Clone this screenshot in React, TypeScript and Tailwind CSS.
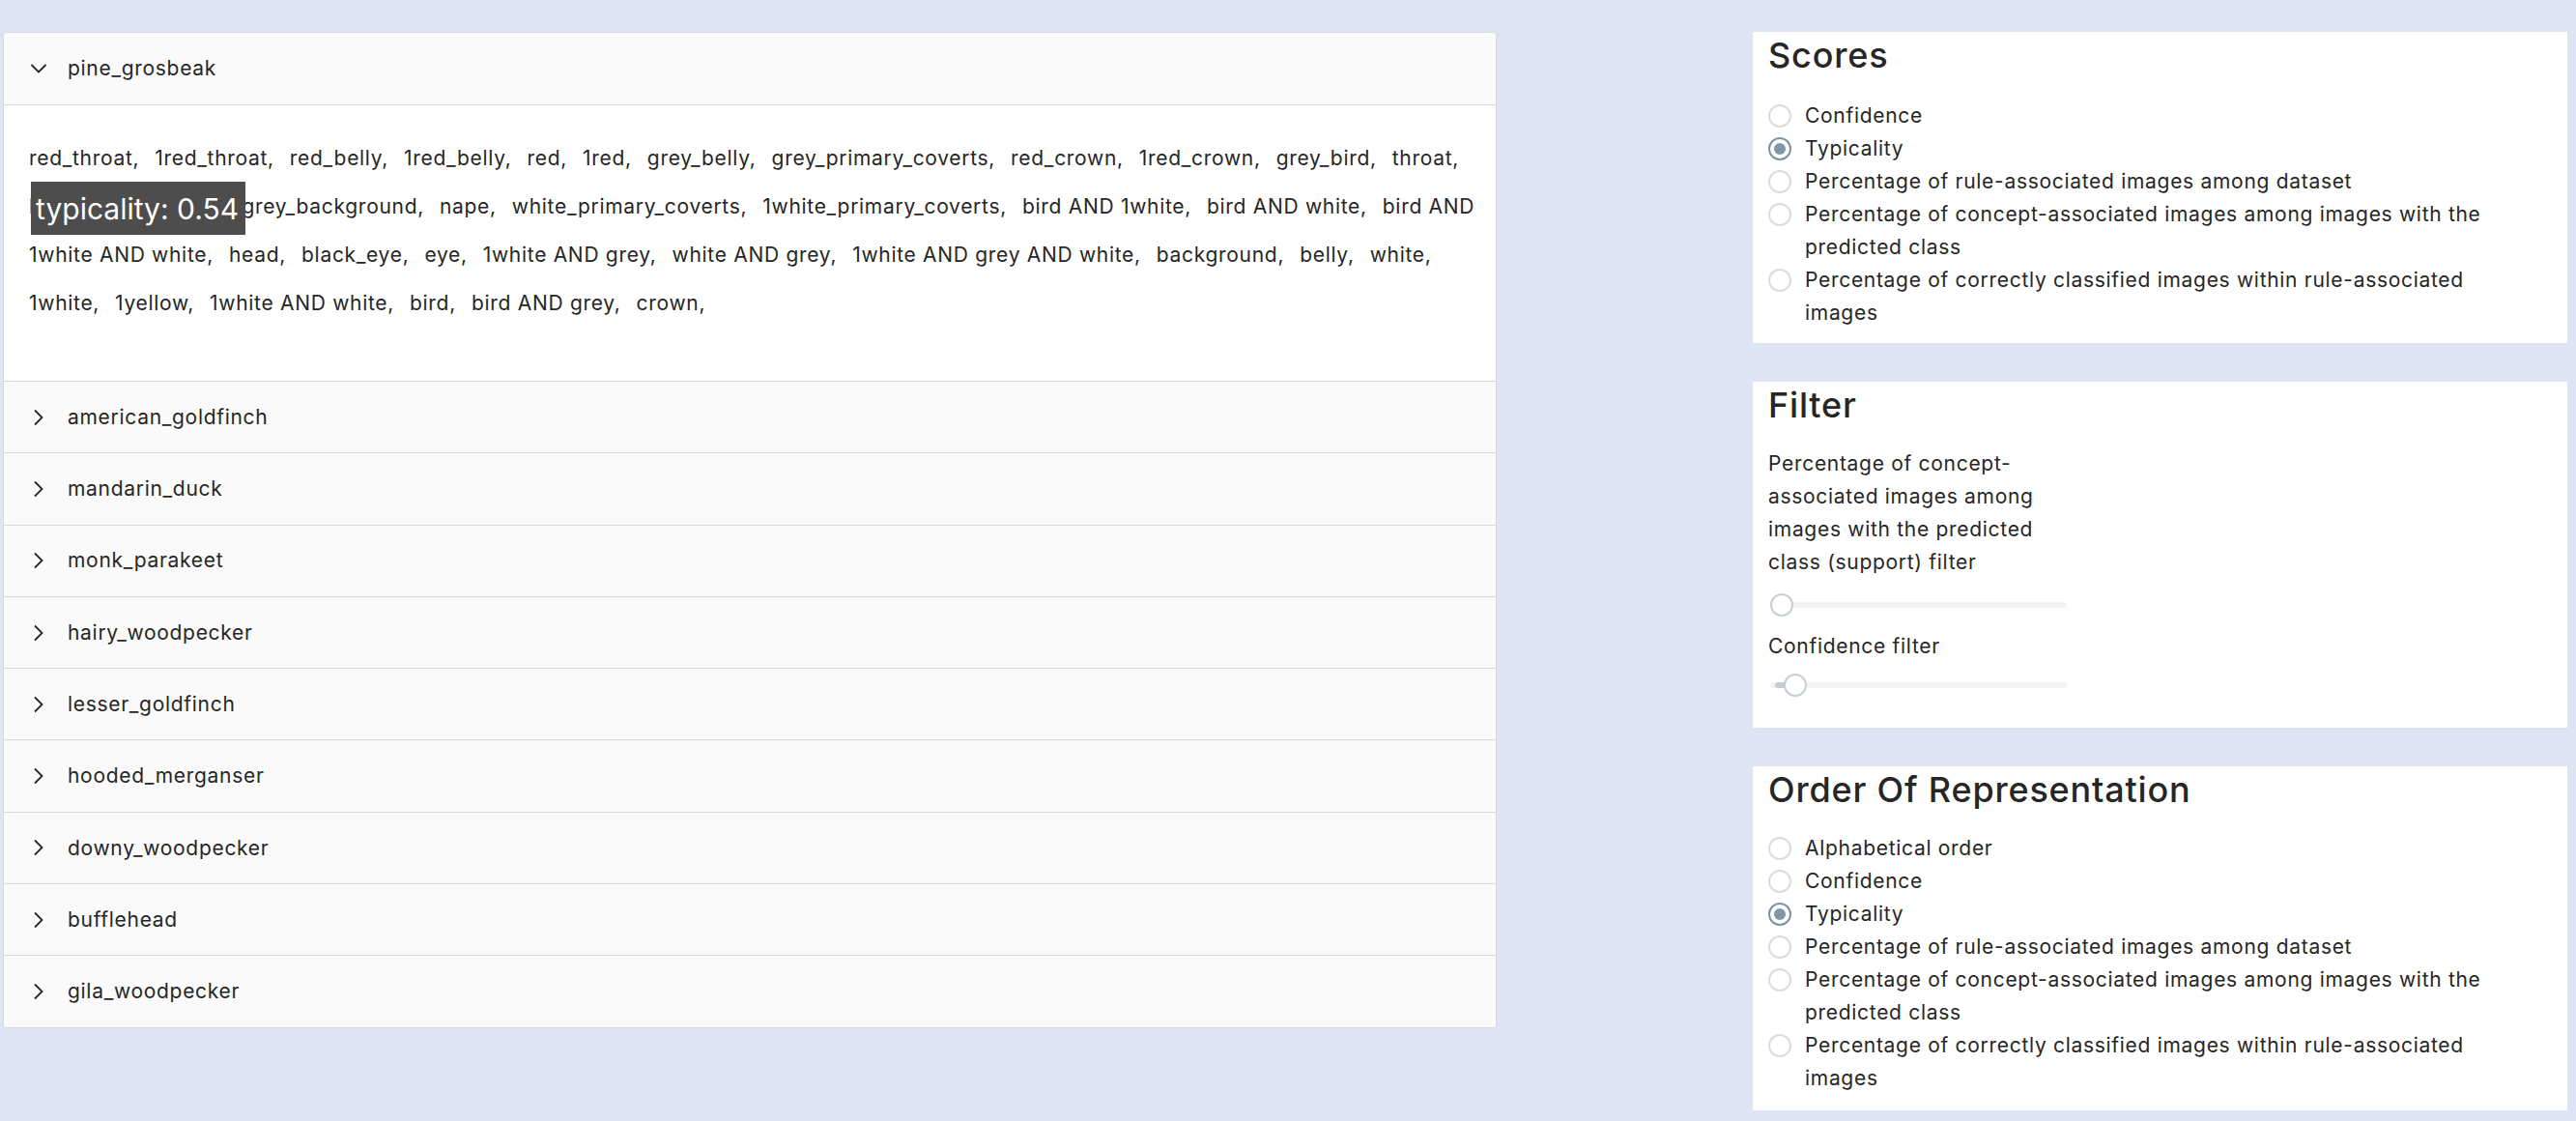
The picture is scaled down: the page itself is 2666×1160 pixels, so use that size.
import { useState } from "react";

const birds = [
  "american_goldfinch",
  "mandarin_duck",
  "monk_parakeet",
  "hairy_woodpecker",
  "lesser_goldfinch",
  "hooded_merganser",
  "downy_woodpecker",
  "bufflehead",
  "gila_woodpecker",
];

// rules for the open class, one entry per rendered line
const ruleLines = [
  ["red_throat", "1red_throat", "red_belly", "1red_belly", "red", "1red", "grey_belly", "grey_primary_coverts", "red_crown", "1red_crown", "grey_bird", "throat"],
  ["body", "wing", "alula", "grey_background", "nape", "white_primary_coverts", "1white_primary_coverts", "bird AND 1white", "bird AND white", "bird AND"],
  ["1white AND white", "head", "black_eye", "eye", "1white AND grey", "white AND grey", "1white AND grey AND white", "background", "belly", "white"],
  ["1white", "1yellow", "1white AND white", "bird", "bird AND grey", "crown"],
];

const scoreOptions = [
  "Confidence",
  "Typicality",
  "Percentage of rule-associated images among dataset",
  "Percentage of concept-associated images among images with the predicted class",
  "Percentage of correctly classified images within rule-associated images",
];

const orderOptions = ["Alphabetical order", ...scoreOptions];

function Chevron({ open }: { open?: boolean }) {
  return open ? (
    <svg width="18" height="12" viewBox="0 0 18 12" className="shrink-0">
      <polyline points="1.5,2 9,9.5 16.5,2" fill="none" stroke="#262626" strokeWidth="1.8" />
    </svg>
  ) : (
    <svg width="12" height="18" viewBox="0 0 12 18" className="shrink-0">
      <polyline points="2,1.5 9.5,9 2,16.5" fill="none" stroke="#262626" strokeWidth="1.8" />
    </svg>
  );
}

function Radio({ checked }: { checked?: boolean }) {
  return (
    <span className="flex h-[34px] w-[24px] shrink-0 items-center">
      <span
        className={`flex h-[24px] w-[24px] items-center justify-center rounded-full border-2 bg-white ${
          checked ? "border-[#7b94a3]" : "border-[#dcdcdc]"
        }`}
      >
        {checked && <span className="h-[12px] w-[12px] rounded-full bg-[#7f97a6]" />}
      </span>
    </span>
  );
}

function RadioGroup({ options, value }: { options: string[]; value: string }) {
  const [selected, setSelected] = useState(value);
  return (
    <div className="flex flex-col">
      {options.map((opt) => (
        <label key={opt} className="flex cursor-pointer items-start" onClick={() => setSelected(opt)}>
          <Radio checked={selected === opt} />
          <span className="ml-[14px] text-[21px] leading-[34px] tracking-[0.7px] text-[#262626]">{opt}</span>
        </label>
      ))}
    </div>
  );
}

function Slider({ value }: { value: number }) {
  return (
    <div className="relative ml-[2px] h-[24px] w-[307px]">
      <div className="absolute left-0 right-0 top-[9px] h-[6px] rounded-full bg-[#f3f3f3]" />
      {value > 0 && (
        <div className="absolute left-[5px] top-[9px] h-[6px] rounded-full bg-[#c6ccd0]" style={{ width: value }} />
      )}
      <div
        className="absolute top-0 h-[24px] w-[24px] rounded-full border-2 border-[#c8cfd3] bg-white"
        style={{ left: value }}
      />
    </div>
  );
}

function Card({ title, children, className }: { title: string; children: React.ReactNode; className?: string }) {
  return (
    <div className={`bg-white pl-[16px] pr-[56px] ${className ?? ""}`}>
      <h3 className="mt-[2px] text-[36px] font-medium leading-[44px] tracking-[0.8px] text-[#262626]">{title}</h3>
      {children}
    </div>
  );
}

export default function App() {
  const [open, setOpen] = useState("pine_grosbeak");

  return (
    <div
      className="flex min-h-[1160px] w-[2666px] items-start bg-[#dfe4f4] pl-[3px] pt-[33px]"
      style={{ fontFamily: "Inter, 'Noto Sans', sans-serif" }}
    >
      {/* Class list */}
      <div className="w-[1546px] rounded-[3px] border border-[#d9d9d9] bg-[#fafafa] text-[#262626] tracking-[0.7px]">
        <button
          className="flex h-[74px] w-full items-center gap-[21px] pl-[27px] text-left text-[21px]"
          onClick={() => setOpen(open === "pine_grosbeak" ? "" : "pine_grosbeak")}
        >
          <Chevron open={open === "pine_grosbeak"} />
          <span>pine_grosbeak</span>
        </button>
        {open === "pine_grosbeak" && (
          <div className="relative border-t border-[#d9d9d9] bg-white pb-[55px] pl-[26px] pt-[30px] text-[21px] leading-[50px]">
            {ruleLines.map((line, i) => (
              <div key={i} className="whitespace-pre">
                {line.map((r, j) => (
                  <span key={j} className="mr-[16px]">
                    {i === 1 && j === line.length - 1 ? r : r + ","}
                  </span>
                ))}
              </div>
            ))}
            <div className="absolute left-[28px] top-[79px] flex h-[55px] w-[222px] items-center bg-[#4d4d4d] pl-[5px] text-[30px] leading-none tracking-normal text-white">
              typicality: 0.54
            </div>
          </div>
        )}
        {birds.map((b) => (
          <div
            key={b}
            className="flex h-[74.3px] items-center gap-[24px] border-t border-[#d9d9d9] pl-[30px] text-[21px]"
          >
            <Chevron />
            <span>{b}</span>
          </div>
        ))}
      </div>

      {/* Controls */}
      <div className="ml-[265px] flex w-[843px] flex-col">
        <Card title="Scores" className="h-[322px]">
          <div className="mt-[24px]">
            <RadioGroup options={scoreOptions} value="Typicality" />
          </div>
        </Card>

        <Card title="Filter" className="mt-[40px] h-[358px]">
          <div className="mt-[22px] w-[310px] text-[21px] leading-[34px] tracking-[0.7px] text-[#262626]">
            <p>
              Percentage of concept-associated images among images with the predicted class (support) filter
            </p>
            <div className="mt-[15px]">
              <Slider value={0} />
            </div>
            <p className="mt-[14px]">Confidence filter</p>
            <div className="mt-[11px]">
              <Slider value={14} />
            </div>
          </div>
        </Card>

        <Card title="Order Of Representation" className="mt-[40px] h-[356px]">
          <div className="mt-[22px]">
            <RadioGroup options={orderOptions} value="Typicality" />
          </div>
        </Card>
      </div>
    </div>
  );
}
